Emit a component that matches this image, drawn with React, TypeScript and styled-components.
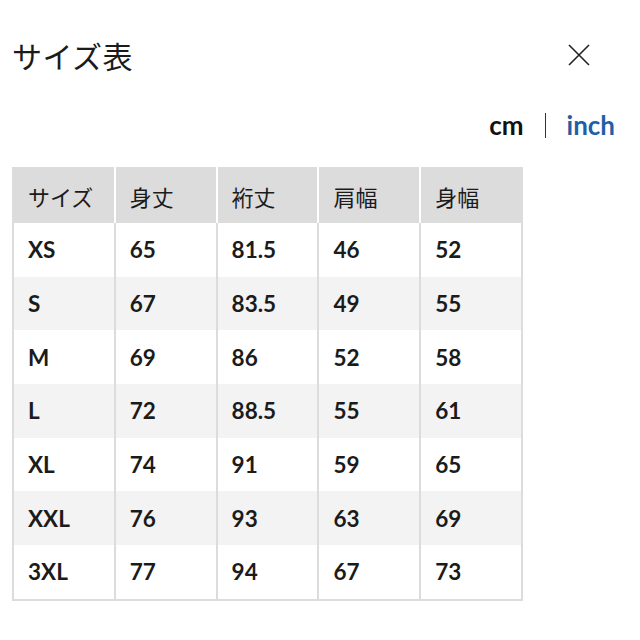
import styled, { createGlobalStyle } from "styled-components";

const GlobalStyle = createGlobalStyle`
  body {
    margin: 0;
    background: #fff;
    font-family: "Lato", "Noto Sans CJK JP", sans-serif;
    color: #1b1b1b;
  }
`;

const headers = ["サイズ", "身丈", "裄丈", "肩幅", "身幅"];

const rows = [
  ["XS", "65", "81.5", "46", "52"],
  ["S", "67", "83.5", "49", "55"],
  ["M", "69", "86", "52", "58"],
  ["L", "72", "88.5", "55", "61"],
  ["XL", "74", "91", "59", "65"],
  ["XXL", "76", "93", "63", "69"],
  ["3XL", "77", "94", "67", "73"],
];

const App = () => {
  return (
    <Page>
      <GlobalStyle />
      <Header>
        <Title>サイズ表</Title>
        <Close aria-label="close">
          <svg width="22" height="22" viewBox="0 0 22 22">
            <path d="M1 1 L21 21 M21 1 L1 21" stroke="#222" strokeWidth="1.6" fill="none" />
          </svg>
        </Close>
      </Header>
      <Units>
        <Unit>cm</Unit>
        <Divider />
        <Unit active>inch</Unit>
      </Units>
      <Table>
        <thead>
          <tr>
            {headers.map((h) => (
              <Th key={h}>{h}</Th>
            ))}
          </tr>
        </thead>
        <tbody>
          {rows.map((r, i) => (
            <Row key={r[0]} striped={i % 2 === 1}>
              {r.map((c, j) => (
                <Td key={j}>{c}</Td>
              ))}
            </Row>
          ))}
        </tbody>
      </Table>
    </Page>
  );
};

const Page = styled.div`
  width: 640px;
  height: 640px;
  padding: 35px 0 0 12px;
  box-sizing: border-box;
`;

const Header = styled.div`
  display: flex;
  align-items: center;
  justify-content: space-between;
  padding-right: 50px;
`;

const Title = styled.h1`
  margin: 0;
  font-family: "Noto Sans CJK JP", sans-serif;
  font-size: 30px;
  font-weight: 400;
  line-height: 40px;
  letter-spacing: 0.5px;
`;

const Close = styled.div`
  width: 22px;
  height: 22px;
  display: flex;
`;

const Units = styled.div`
  display: flex;
  justify-content: flex-end;
  align-items: center;
  gap: 21px;
  padding-right: 25px;
  margin-top: 35px;
  height: 30px;
`;

const Unit = styled.span<{ active?: boolean }>`
  font-size: 26px;
  font-weight: 700;
  color: ${({ active }) => (active ? "#1f5fa6" : "#111")};
`;

const Divider = styled.span`
  width: 1px;
  height: 25px;
  background: #333;
`;

const Table = styled.table`
  margin-top: 27px;
  border-collapse: collapse;
  border: 2px solid #dcdcdc;
  table-layout: fixed;
  width: 511px;
`;

const Th = styled.th`
  background: #dcdcdc;
  height: 54px;
  padding: 0 0 0 14px;
  text-align: left;
  font-family: "Noto Sans CJK JP", sans-serif;
  font-size: 22px;
  font-weight: 400;
  border-left: 2px solid #fff;
  &:first-child {
    border-left: none;
  }
`;

const Row = styled.tr<{ striped: boolean }>`
  background: ${({ striped }) => (striped ? "#f3f3f3" : "#fff")};
`;

const Td = styled.td`
  height: 53.7px;
  padding: 0 0 0 14px;
  font-size: 22.5px;
  font-weight: 700;
  border-left: 2px solid #dcdcdc;
  &:first-child {
    border-left: none;
  }
`;

export default App;
